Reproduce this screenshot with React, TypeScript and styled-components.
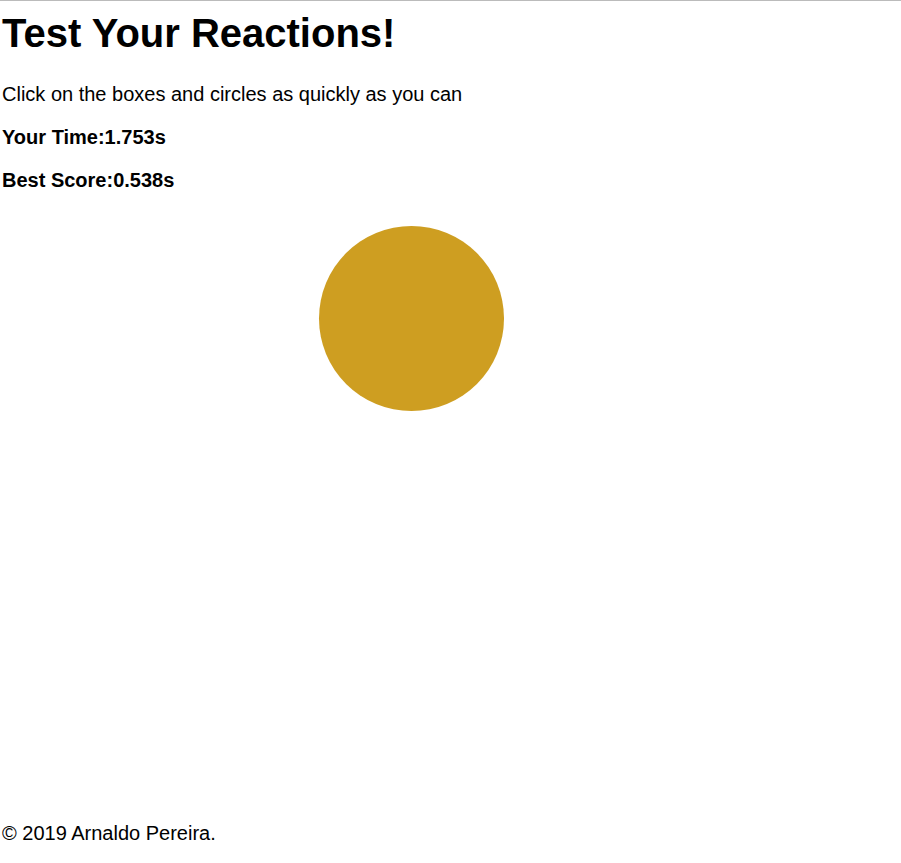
import React from "react";
import styled, { createGlobalStyle } from "styled-components";

const Global = createGlobalStyle`
  html, body { margin: 0; padding: 0; background: #fff; }
  body { font-family: "Liberation Sans", Arial, sans-serif; color: #000; font-size: 20px; }
`;

const Page = styled.div`
  min-height: 863px;
  box-sizing: border-box;
  border-top: 1px solid #bbb;
  padding: 0 2px 18px 2px;
  display: flex;
  flex-direction: column;
`;

const Title = styled.h1`
  font-size: 40px;
  font-weight: bold;
  margin: 10px 0 0 0;
  line-height: normal;
`;

const Intro = styled.p`
  margin: 27px 0 0 0;
  font-size: 20px;
  line-height: normal;
`;

const Stat = styled.p`
  margin: 20px 0 0 0;
  font-size: 20px;
  font-weight: bold;
  line-height: normal;
`;

const Arena = styled.div`
  position: relative;
  height: 230px;
`;

const Shape = styled.div<{ $round: boolean; $color: string; $size: number }>`
  position: absolute;
  width: ${(p) => p.$size}px;
  height: ${(p) => p.$size}px;
  background: ${(p) => p.$color};
  border-radius: ${(p) => (p.$round ? "50%" : "0")};
  cursor: pointer;
`;

const Footer = styled.footer`
  margin-top: auto;
  font-size: 20px;
  line-height: normal;
`;

export default function App() {
  return (
    <>
      <Global />
      <Page>
        <Title>Test Your Reactions!</Title>
        <Intro>Click on the boxes and circles as quickly as you can</Intro>
        <Stat>Your Time:1.753s</Stat>
        <Stat>Best Score:0.538s</Stat>
        <Arena>
          <Shape $round $color="#ce9e21" $size={185} style={{ left: 317, top: 34 }} />
        </Arena>
        <Footer>© 2019 Arnaldo Pereira.</Footer>
      </Page>
    </>
  );
}
